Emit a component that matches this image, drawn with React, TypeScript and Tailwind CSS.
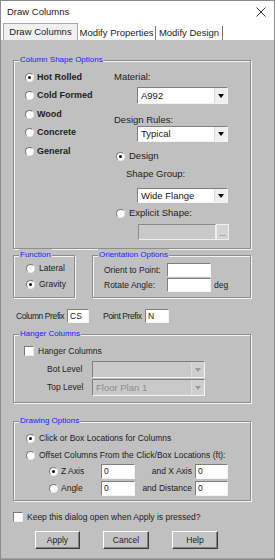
import React from "react";

// small win-classic widgets
function Radio({ checked }: { checked?: boolean }) {
  return (
    <span className="w-[9px] h-[9px] shrink-0 rounded-full bg-white border border-[#7a7a7a] border-r-[#e8e8e8] border-b-[#e8e8e8] flex items-center justify-center">
      {checked && <span className="w-[3px] h-[3px] rounded-full bg-black" />}
    </span>
  );
}

function Check() {
  return <span className="w-[10px] h-[10px] shrink-0 bg-white border border-[#7a7a7a] border-r-[#eeeeee] border-b-[#eeeeee]" />;
}

function Arrow({ disabled }: { disabled?: boolean }) {
  return (
    <span
      className={
        "w-[13px] h-full shrink-0 flex items-center justify-center border-l border-[#dcdcdc] " +
        (disabled ? "bg-[#cfcfcf]" : "bg-[#f0f0f0]")
      }
    >
      <span
        className={
          "w-0 h-0 border-l-[3px] border-r-[3px] border-t-[4px] border-l-transparent border-r-transparent " +
          (disabled ? "border-t-[#9a9a9a]" : "border-t-black")
        }
      />
    </span>
  );
}

function Select({ value, w, h, disabled }: { value?: string; w: string; h: string; disabled?: boolean }) {
  return (
    <div
      className={
        w +
        " " +
        h +
        " flex items-stretch border border-[#808080] border-r-[#f4f4f4] border-b-[#f4f4f4] " +
        (disabled ? "bg-[#c9c9c9] text-[#8c8c8c]" : "bg-white text-[#202020]")
      }
    >
      <span className="flex-1 pl-[3px] flex items-center text-[9.5px] leading-none truncate">{value}</span>
      <Arrow disabled={disabled} />
    </div>
  );
}

function Field({ value, w }: { value?: string; w: string }) {
  return (
    <div className={w + " h-full shrink-0 bg-white border border-[#808080] border-r-[#f4f4f4] border-b-[#f4f4f4] pl-[2px] flex items-center text-[8.5px] tracking-normal leading-none"}>
      {value}
    </div>
  );
}

function Group({ title, className, children }: { title: string; className: string; children?: React.ReactNode }) {
  return (
    <div className={"relative border border-[#8e8e8e] shadow-[inset_1px_1px_0_#f2f2f2,1px_1px_0_#f2f2f2] " + className}>
      <span className="absolute left-[5px] top-[-7px] px-[1px] bg-[#c0c0c0] text-[8px] leading-[12px] text-[#2020ff]">{title}</span>
      {children}
    </div>
  );
}

function Btn({ label, w }: { label: string; w: string }) {
  return (
    <div className={w + " h-[18px] bg-[#c4c4c4] border border-white border-r-[#3c3c3c] border-b-[#3c3c3c] shadow-[inset_-1px_-1px_0_#808080] flex items-center justify-center text-[8.5px]"}>
      {label}
    </div>
  );
}

const shapes = ["Hot Rolled", "Cold Formed", "Wood", "Concrete", "General"];

export default function App() {
  return (
    <div className="w-[275px] h-[560px] bg-white border border-[#8c8c8c] flex flex-col whitespace-nowrap font-['Liberation_Sans',Arial,sans-serif] text-[#222]">
      {/* title bar */}
      <div className="h-[22px] flex items-center justify-between pl-[6px] pr-[6px] text-[9.5px]">
        <span>Draw Columns</span>
        <svg width="10" height="10" viewBox="0 0 10 10" className="mr-[2px]">
          <path d="M0.5 0.5L9.5 9.5M9.5 0.5L0.5 9.5" stroke="#333" strokeWidth="1" />
        </svg>
      </div>

      {/* tabs */}
      <div className="h-[17px] flex items-stretch pl-[2px] text-[9.5px]">
        <div className="w-[75px] bg-[#f0f0f0] border border-b-0 border-[#a8a8a8] flex items-center justify-center leading-none">
          Draw Columns
        </div>
        <div className="w-[78px] mt-[3px] border-r border-[#777] flex items-center justify-center leading-none">
          Modify Properties
        </div>
        <div className="w-[67px] mt-[3px] border-r border-[#777] flex items-center justify-center leading-none">
          Modify Design
        </div>
      </div>

      {/* page */}
      <div className="flex-1 bg-[#c0c0c0] pl-[12px] pt-[20px] border-b border-[#a0a0a0]">
        <Group title="Column Shape Options" className="w-[238px] h-[189px] flex">
          <div className="ml-[11px] w-[89px] pt-[7px] flex flex-col">
            {shapes.map((s, i) => (
              <div key={s} className="h-[18.5px] flex items-center gap-[3px] font-bold text-[9px]">
                <Radio checked={i === 0} />
                <span>{s}</span>
              </div>
            ))}
          </div>
          <div className="pt-[10px] flex flex-col text-[9.5px]">
            <div className="h-[11px] leading-[11px]">Material:</div>
            <div className="mt-[5px] ml-[23px]">
              <Select value="A992" w="w-[91px]" h="h-[17px]" />
            </div>
            <div className="mt-[10px] h-[11px] leading-[11px]">Design Rules:</div>
            <div className="mt-[1px] ml-[23px]">
              <Select value="Typical" w="w-[91px]" h="h-[16px]" />
            </div>
            <div className="mt-[8px] ml-[2px] h-[12px] flex items-center gap-[4px]">
              <Radio checked />
              <span>Design</span>
            </div>
            <div className="mt-[6px] ml-[12px] h-[11px] leading-[11px]">Shape Group:</div>
            <div className="mt-[9px] ml-[23px]">
              <Select value="Wide Flange" w="w-[91px]" h="h-[15px]" />
            </div>
            <div className="mt-[4px] ml-[2px] h-[12px] flex items-center gap-[4px]">
              <Radio />
              <span>Explicit Shape:</span>
            </div>
            <div className="mt-[5px] ml-[24px] h-[16px] flex">
              <div className="w-[78px] h-full bg-[#c9c9c9] border border-[#8a8a8a] border-r-[#eeeeee] border-b-[#eeeeee]" />
              <div className="w-[13px] h-full bg-[#d4d4d4] border border-[#eeeeee] flex items-end justify-center text-[7px] leading-[10px] text-[#444]">
                ...
              </div>
            </div>
          </div>
        </Group>

        <div className="mt-[6px] flex text-[8.5px]">
          <Group title="Function" className="w-[62px] h-[43px] pl-[12px] pt-[4px]">
            <div className="h-[16px] flex items-center gap-[4px]">
              <Radio />
              <span>Lateral</span>
            </div>
            <div className="h-[16px] flex items-center gap-[4px]">
              <Radio checked />
              <span>Gravity</span>
            </div>
          </Group>
          <Group title="Orientation Options" className="ml-[17px] w-[159px] h-[43px] pl-[11px] pt-[7px]">
            <div className="h-[14px] flex items-center">
              <span className="w-[63px]">Orient to Point:</span>
              <Field w="w-[44px]" />
            </div>
            <div className="mt-[1px] h-[14px] flex items-center">
              <span className="w-[63px]">Rotate Angle:</span>
              <Field w="w-[44px]" />
              <span className="ml-[3px]">deg</span>
            </div>
          </Group>
        </div>

        <div className="mt-[11px] ml-[3px] h-[14px] flex items-center text-[8.5px] tracking-[-0.4px]">
          <span className="w-[51px] shrink-0">Column Prefix</span>
          <Field value="CS" w="w-[22px]" />
          <span className="ml-[14px] w-[42px] shrink-0">Point Prefix</span>
          <Field value="N" w="w-[24px]" />
        </div>

        <Group title="Hanger Columns" className="mt-[11px] w-[238px] h-[69px] text-[8.5px]">
          <div className="mt-[11px] ml-[10px] h-[10px] flex items-center gap-[4px]">
            <Check />
            <span>Hanger Columns</span>
          </div>
          <div className="mt-[5px] ml-[33px] h-[17px] flex items-center">
            <span className="w-[45px]">Bot Level</span>
            <Select w="w-[113px]" h="h-[17px]" disabled />
          </div>
          <div className="mt-[1px] ml-[33px] h-[17px] flex items-center">
            <span className="w-[45px]">Top Level</span>
            <Select value="Floor Plan 1" w="w-[113px]" h="h-[17px]" disabled />
          </div>
        </Group>

        <Group title="Drawing Options" className="mt-[18px] w-[238px] h-[80px] text-[8.5px]">
          <div className="mt-[10px] ml-[12px] h-[12px] flex items-center gap-[4px]">
            <Radio checked />
            <span>Click or Box Locations for Columns</span>
          </div>
          <div className="mt-[5px] ml-[12px] h-[12px] flex items-center gap-[4px]">
            <Radio />
            <span>Offset Columns From the Click/Box Locations (ft):</span>
          </div>
          <div className="mt-[3px] ml-[35px] h-[15px] flex items-center">
            <Radio checked />
            <span className="ml-[3px] w-[40px]">Z Axis</span>
            <Field value="0" w="w-[34px]" />
            <span className="w-[60px] pr-[3px] text-right">and X Axis</span>
            <Field value="0" w="w-[33px]" />
          </div>
          <div className="mt-[2px] ml-[35px] h-[15px] flex items-center">
            <Radio />
            <span className="ml-[3px] w-[40px]">Angle</span>
            <Field value="0" w="w-[34px]" />
            <span className="w-[60px] pr-[3px] text-right">and Distance</span>
            <Field value="0" w="w-[33px]" />
          </div>
        </Group>

        <div className="mt-[11px] h-[10px] flex items-center gap-[4px] text-[8.5px]">
          <Check />
          <span>Keep this dialog open when Apply is pressed?</span>
        </div>

        <div className="mt-[9px] ml-[22px] flex gap-[23px]">
          <Btn label="Apply" w="w-[45px]" />
          <Btn label="Cancel" w="w-[46px]" />
          <Btn label="Help" w="w-[46px]" />
        </div>
      </div>
    </div>
  );
}
